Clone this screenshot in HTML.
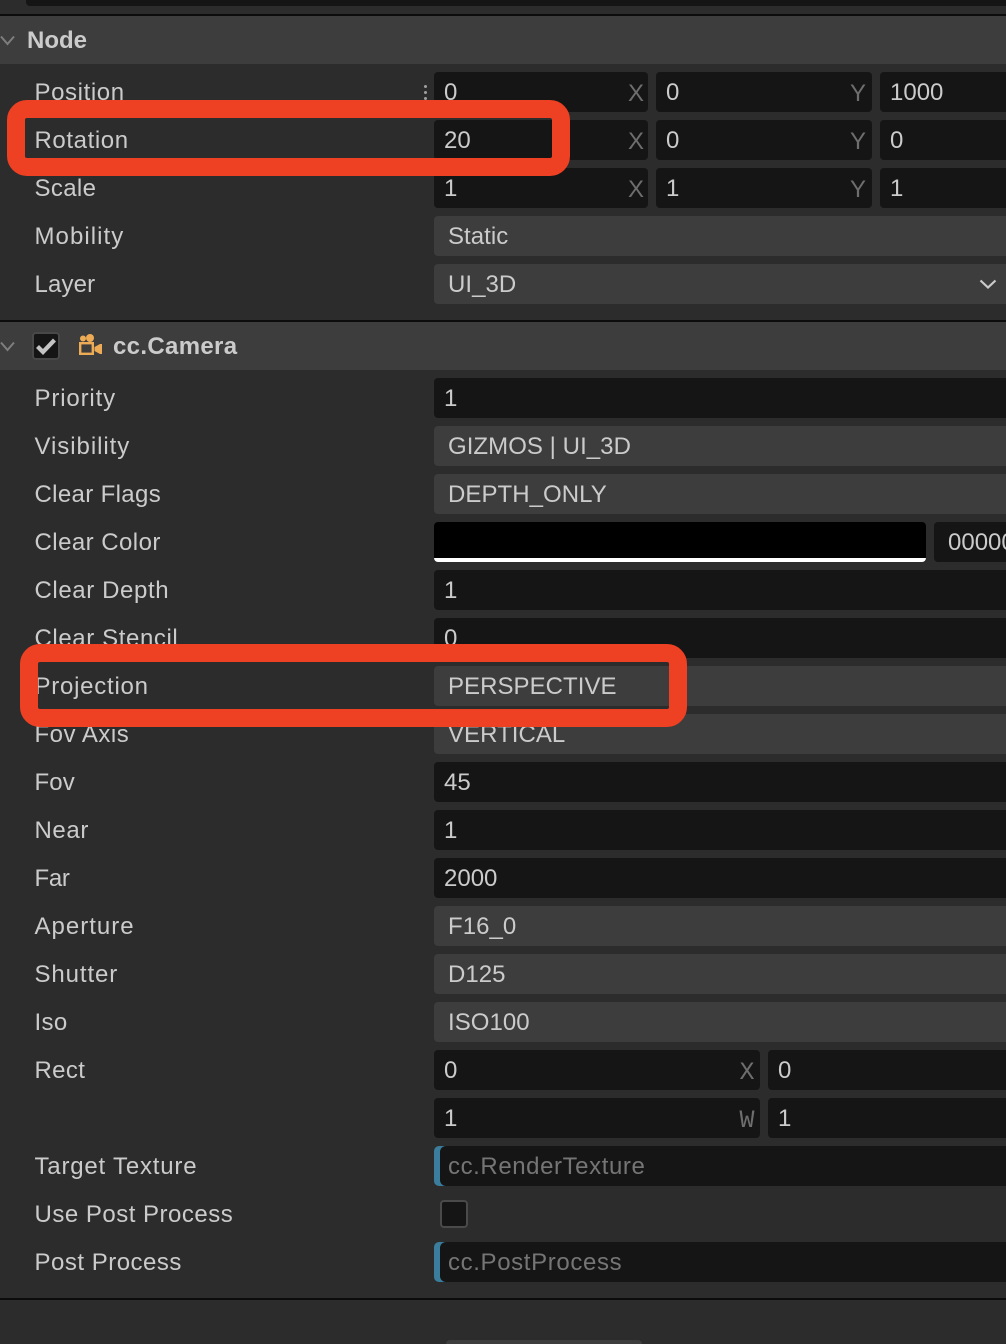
<!DOCTYPE html>
<html><head><meta charset="utf-8">
<style>
html,body{margin:0;padding:0;background:#2c2c2c}
#p{position:relative;width:1006px;height:1344px;overflow:hidden;background:#2c2c2c;font-family:"Liberation Sans",sans-serif;font-size:24px;color:#cbcbcb}
#p div{position:absolute;box-sizing:border-box}
.l{left:34.500px;height:40px;line-height:42px;white-space:nowrap;letter-spacing:.35px}
.f,.s{height:40px;line-height:42px;border-radius:4px;white-space:nowrap;overflow:hidden}
.f{background:#151515;padding-left:10px}
.s{background:#3d3d3d;padding-left:14px;left:434px;width:590px;letter-spacing:.05px}
.h{left:0;width:1006px;height:48px;background:#3d3d3d;line-height:50px;font-weight:bold}
.k{height:2px;left:0;width:1006px;background:#0c0c0c}
.a{height:40px;line-height:44px;color:#6e6e6e;width:18px;text-align:center}
.m{font-family:"Liberation Mono",monospace;font-size:25px;line-height:46px}
.o{background:#3a7d9c;left:434px;width:590px;height:40px;border-radius:5px;overflow:hidden}
.o div{left:6px;top:0;width:600px;height:40px;line-height:42px;background:#151515;border-radius:6px;padding-left:8px;color:#757575}
.r{border:18px solid #ee4023;border-radius:20px;background:transparent}
</style></head><body><div id="p">
<div style="left:26px;top:-10px;width:990px;height:16px;background:#151515;border-radius:4px"></div>
<div class="k" style="top:14px"></div>
<div class="h" style="top:16px"><span style="position:absolute;left:27px">Node</span></div>
<svg style="position:absolute;left:0;top:35px" width="15" height="11" fill="none" stroke="#7e7e7e" stroke-width="2"><path d="M1 1.500l6.500 7.500 6.500-7.500"/></svg>

<div class="l" style="top:72px;letter-spacing:.6px">Position</div>
<div style="left:424px;top:85px;width:3px;height:3px;background:#a0a0a0;border-radius:50%"></div>
<div style="left:424px;top:91px;width:3px;height:3px;background:#a0a0a0;border-radius:50%"></div>
<div style="left:424px;top:97px;width:3px;height:3px;background:#a0a0a0;border-radius:50%"></div>
<div class="f" style="left:434px;top:72px;width:214px">0</div>
<div class="a" style="left:627px;top:72px">X</div>
<div class="f" style="left:656px;top:72px;width:216px">0</div>
<div class="a" style="left:849px;top:72px">Y</div>
<div class="f" style="left:880px;top:72px;width:140px">1000</div>

<div class="l" style="top:120px;letter-spacing:.6px">Rotation</div>
<div class="f" style="left:434px;top:120px;width:214px">20</div>
<div class="a" style="left:627px;top:120px">X</div>
<div class="f" style="left:656px;top:120px;width:216px">0</div>
<div class="a" style="left:849px;top:120px">Y</div>
<div class="f" style="left:880px;top:120px;width:140px">0</div>

<div class="l" style="top:168px">Scale</div>
<div class="f" style="left:434px;top:168px;width:214px">1</div>
<div class="a" style="left:627px;top:168px">X</div>
<div class="f" style="left:656px;top:168px;width:216px">1</div>
<div class="a" style="left:849px;top:168px">Y</div>
<div class="f" style="left:880px;top:168px;width:140px">1</div>

<div class="l" style="top:216px;letter-spacing:1.05px">Mobility</div>
<div class="s" style="top:216px">Static</div>
<div class="l" style="top:264px;letter-spacing:.15px">Layer</div>
<div class="s" style="top:264px">UI_3D</div>
<svg style="position:absolute;left:979px;top:279px" width="18" height="11" fill="none" stroke="#cbcbcb" stroke-width="2.200"><path d="M1.500 1.500l7.500 7 7.500-7"/></svg>

<div class="k" style="top:320px"></div>
<div class="h" style="top:322px"><span style="position:absolute;left:113px;letter-spacing:.33px">cc.Camera</span></div>
<svg style="position:absolute;left:0;top:341px" width="15" height="11" fill="none" stroke="#7e7e7e" stroke-width="2"><path d="M1 1.500l6.500 7.500 6.500-7.500"/></svg>
<div style="left:32px;top:332px;width:28px;height:28px;background:#151515;border:2px solid #484848;border-radius:4px"></div>
<svg style="position:absolute;left:36px;top:337px" width="20" height="18" fill="none" stroke="#c4c4c4" stroke-width="4.200"><path d="M1.500 9.500l5.500 5.500L18.500 3"/></svg>
<svg style="position:absolute;left:78px;top:333px" width="25" height="23"><circle cx="5" cy="5.500" r="3" fill="#eeab55"/><circle cx="12" cy="5" r="4" fill="#eeab55"/><rect x="2.200" y="10.200" width="12.600" height="10.600" fill="none" stroke="#eeab55" stroke-width="2.400"/><path d="M16.500 14l5.500-3h2v10h-2l-5.500-3z" fill="#eeab55"/></svg>

<div class="l" style="top:378px;letter-spacing:.85px">Priority</div>
<div class="f" style="left:434px;top:378px;width:590px">1</div>
<div class="l" style="top:426px;letter-spacing:.95px">Visibility</div>
<div class="s" style="top:426px">GIZMOS | UI_3D</div>
<div class="l" style="top:474px">Clear Flags</div>
<div class="s" style="top:474px">DEPTH_ONLY</div>
<div class="l" style="top:522px;letter-spacing:.45px">Clear Color</div>
<div style="left:434px;top:522px;width:492px;height:40px;background:#000;border-radius:4px;overflow:hidden"><div style="left:0;top:36px;width:492px;height:4px;background:#fff"></div></div>
<div class="f" style="left:934px;top:522px;width:90px;padding-left:14px">000000</div>
<div class="l" style="top:570px;letter-spacing:.6px">Clear Depth</div>
<div class="f" style="left:434px;top:570px;width:590px">1</div>
<div class="l" style="top:618px;letter-spacing:.6px">Clear Stencil</div>
<div class="f" style="left:434px;top:618px;width:590px">0</div>
<div class="l" style="top:666px;letter-spacing:.75px">Projection</div>
<div class="s" style="top:666px">PERSPECTIVE</div>
<div class="l" style="top:714px;letter-spacing:.5px">Fov Axis</div>
<div class="s" style="top:714px">VERTICAL</div>
<div class="l" style="top:762px;letter-spacing:.1px">Fov</div>
<div class="f" style="left:434px;top:762px;width:590px">45</div>
<div class="l" style="top:810px;letter-spacing:.6px">Near</div>
<div class="f" style="left:434px;top:810px;width:590px">1</div>
<div class="l" style="top:858px;letter-spacing:-.3px">Far</div>
<div class="f" style="left:434px;top:858px;width:590px">2000</div>
<div class="l" style="top:906px;letter-spacing:1px">Aperture</div>
<div class="s" style="top:906px">F16_0</div>
<div class="l" style="top:954px;letter-spacing:.9px">Shutter</div>
<div class="s" style="top:954px">D125</div>
<div class="l" style="top:1002px">Iso</div>
<div class="s" style="top:1002px">ISO100</div>
<div class="l" style="top:1050px">Rect</div>
<div class="f" style="left:434px;top:1050px;width:326px">0</div>
<div class="a m" style="left:738px;top:1050px">X</div>
<div class="f" style="left:768px;top:1050px;width:260px">0</div>
<div class="f" style="left:434px;top:1098px;width:326px">1</div>
<div class="a m" style="left:738px;top:1098px">W</div>
<div class="f" style="left:768px;top:1098px;width:260px">1</div>
<div class="l" style="top:1146px;letter-spacing:.8px">Target Texture</div>
<div class="o" style="top:1146px"><div style="letter-spacing:.58px">cc.RenderTexture</div></div>
<div class="l" style="top:1194px;letter-spacing:.5px">Use Post Process</div>
<div style="left:440px;top:1200px;width:28px;height:28px;background:#151515;border:2px solid #4a4a4a;border-radius:4px"></div>
<div class="l" style="top:1242px;letter-spacing:.5px">Post Process</div>
<div class="o" style="top:1242px"><div style="letter-spacing:.63px">cc.PostProcess</div></div>
<div class="k" style="top:1298px"></div>
<div style="left:446px;top:1340px;width:196px;height:10px;background:#3d3d3d;border-radius:4px"></div>

<div class="r" style="left:7px;top:100px;width:563px;height:76px"></div>
<div class="r" style="left:20px;top:644px;width:667px;height:83px"></div>
</div></body></html>
